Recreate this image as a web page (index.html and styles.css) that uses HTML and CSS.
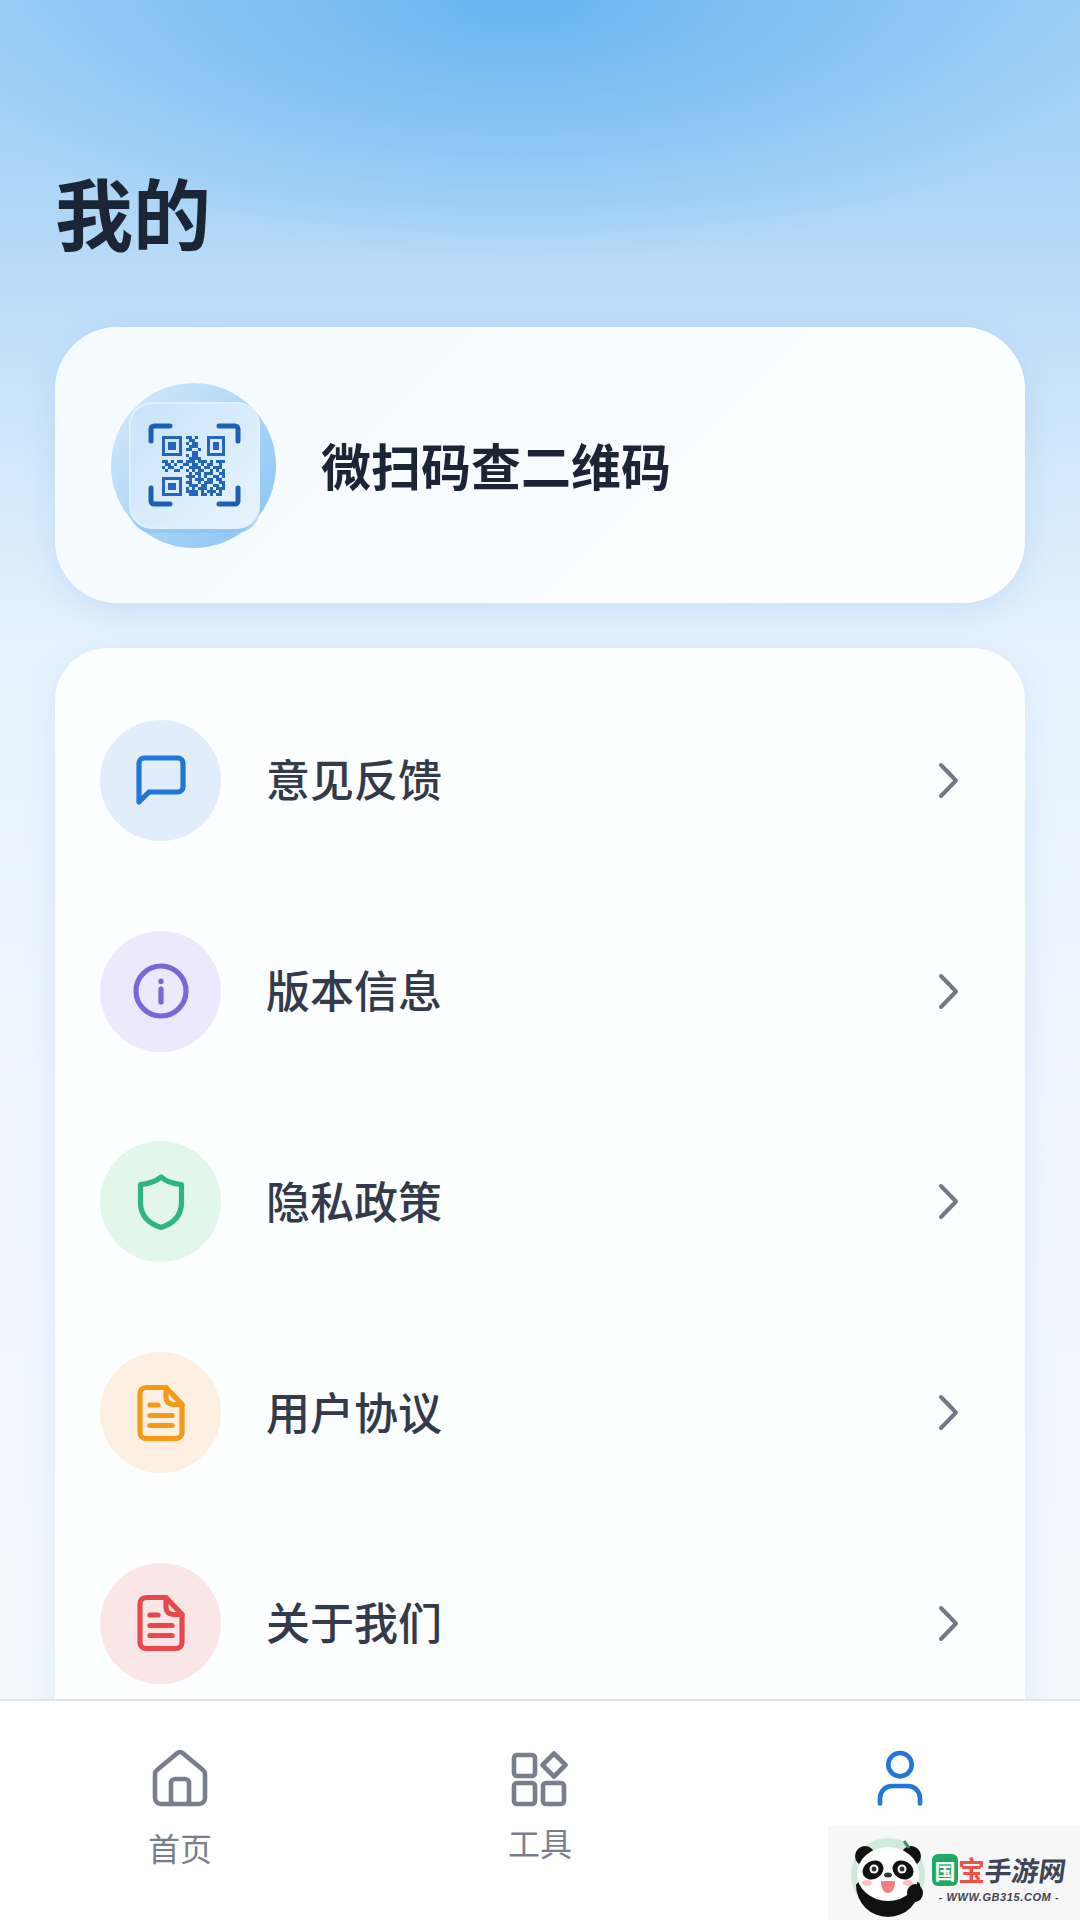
FILE: index.html
```html
<!DOCTYPE html>
<html lang="zh-CN">
<head>
    <meta charset="UTF-8">
    <meta name="viewport" content="width=device-width, initial-scale=1.0">
    <link rel="stylesheet" href="styles.css">
    <title>我的</title>
</head>
<body>
    <svg class="icon-defs" viewBox="0 0 0 0">
        <defs>
            <g id="icon-doc">
                <path d="M15 4.5h20l16 17v28a6 6 0 0 1-6 6H15a6 6 0 0 1-6-6v-39a6 6 0 0 1 6-6z"></path>
                <path d="M35 4.5v10a7 7 0 0 0 7 7h9"></path>
                <path d="M19 22h8M19 32.500h22M19 42.500h22"></path>
            </g>
            <path id="icon-chevron" d="M4 3l15 15.500L4 34"></path>
            <linearGradient id="avatarGradient" x1="0" y1="0" x2="1" y2="1">
                <stop offset="0%" stop-color="#d8ebfb"/>
                <stop offset="100%" stop-color="#84c1f3"/>
            </linearGradient>
            <linearGradient id="tileGradient" x1="0" y1="0" x2="1" y2="1">
                <stop offset="0%" stop-color="#c8e3fa"/>
                <stop offset="100%" stop-color="#e9f4fd"/>
            </linearGradient>
        </defs>
    </svg>

    <div class="page">
        <main class="main">
            <h1 class="main__title">我的</h1>

            <section class="profile-card">
                <svg class="profile-card__avatar" viewBox="0 0 165 165">
                    <circle cx="82.500" cy="82.500" r="82.500" fill="url(#avatarGradient)"></circle>
                    <rect x="19" y="22" width="129" height="128" rx="22" fill="#8fc5f3" opacity="0.7"></rect>
                    <rect x="19" y="20" width="129" height="125" rx="22" fill="url(#tileGradient)" stroke="#e2f0fc" stroke-width="2"></rect>
                    <path class="qr-frame" d="M40 58V46a3 3 0 0 1 3-3h16M108 43h16a3 3 0 0 1 3 3v12M40 105v13a3 3 0 0 0 3 3h16M127 105v13a3 3 0 0 1-3 3h-16"></path>
                    <g transform="translate(51 53)">
                        <path class="qr-finder" d="M1.500 1.500h17v17h-17zM46.500 1.500h15v17h-15zM1.500 42.500h17v16h-17z"></path>
                        <path class="qr-solid" d="M6 6h8v8H6zM51 6h6v8h-6zM6 47h8v7H6z"></path>
                        <path class="qr-cells" d="M24 1.500h6M33 1.500h3M27 4.500h6M24 7.500h3M30 7.500h6M27 10.500h9M24 13.500h6M36 13.500h3M30 16.500h6M24 19.500h3M30 19.500h6M27 22.500h12M0 25.500h6M9 25.500h3M15 25.500h6M24 25.500h9M36 25.500h9M48 25.500h3M54 25.500h9M3 28.500h6M12 28.500h3M21 28.500h6M30 28.500h6M39 28.500h3M45 28.500h6M57 28.500h3M0 31.500h3M6 31.500h6M18 31.500h3M27 31.500h12M42 31.500h6M51 31.500h9M3 34.500h3M12 34.500h6M24 34.500h3M30 34.500h3M36 34.500h6M48 34.500h3M54 34.500h3M60 34.500h3M27 37.500h3M33 37.500h6M42 37.500h9M57 37.500h6M24 40.500h9M36 40.500h3M42 40.500h3M51 40.500h6M60 40.500h3M27 43.500h3M33 43.500h9M45 43.500h6M54 43.500h6M24 46.500h6M36 46.500h3M42 46.500h9M57 46.500h6M27 49.500h9M39 49.500h6M51 49.500h6M60 49.500h3M24 52.500h3M30 52.500h3M36 52.500h9M48 52.500h3M54 52.500h9M24 55.500h12M39 55.500h3M45 55.500h9M57 55.500h3M27 58.500h9M39 58.500h6M48 58.500h3M54 58.500h6"></path>
                    </g>
                </svg>
                <div class="profile-card__name">微扫码查二维码</div>
            </section>

            <section class="menu-card">
                <div class="menu-item">
                    <div class="menu-item__icon menu-item__icon--blue">
                        <svg viewBox="0 0 60 60"><path d="M8 52V13a5 5 0 0 1 5-5h34a5 5 0 0 1 5 5v24a5 5 0 0 1-5 5H18z"></path></svg>
                    </div>
                    <div class="menu-item__text">意见反馈</div>
                    <svg class="menu-item__arrow" viewBox="0 0 23 37"><use href="#icon-chevron"></use></svg>
                </div>
                <div class="menu-item">
                    <div class="menu-item__icon menu-item__icon--purple">
                        <svg viewBox="0 0 60 60"><circle cx="30" cy="30" r="25"></circle><path d="M30 28v13M30 20v.5"></path></svg>
                    </div>
                    <div class="menu-item__text">版本信息</div>
                    <svg class="menu-item__arrow" viewBox="0 0 23 37"><use href="#icon-chevron"></use></svg>
                </div>
                <div class="menu-item">
                    <div class="menu-item__icon menu-item__icon--green">
                        <svg viewBox="0 0 60 60"><path d="M30 5c5 4.500 10 6.500 20.500 7.500v18c0 13-8 21-20.500 25-12.500-4-20.500-12-20.500-25v-18C20 11.500 25 9.500 30 5z"></path></svg>
                    </div>
                    <div class="menu-item__text">隐私政策</div>
                    <svg class="menu-item__arrow" viewBox="0 0 23 37"><use href="#icon-chevron"></use></svg>
                </div>
                <div class="menu-item">
                    <div class="menu-item__icon menu-item__icon--orange">
                        <svg viewBox="0 0 60 60"><use href="#icon-doc"></use></svg>
                    </div>
                    <div class="menu-item__text">用户协议</div>
                    <svg class="menu-item__arrow" viewBox="0 0 23 37"><use href="#icon-chevron"></use></svg>
                </div>
                <div class="menu-item">
                    <div class="menu-item__icon menu-item__icon--red">
                        <svg viewBox="0 0 60 60"><use href="#icon-doc"></use></svg>
                    </div>
                    <div class="menu-item__text">关于我们</div>
                    <svg class="menu-item__arrow" viewBox="0 0 23 37"><use href="#icon-chevron"></use></svg>
                </div>
            </section>
        </main>

        <nav class="tab-bar">
            <div class="tab-bar__item">
                <svg class="tab-bar__icon" viewBox="0 0 60 60">
                    <path d="M27.500 5L7 22a5 5 0 0 0-2 4v24a6 6 0 0 0 6 6h38a6 6 0 0 0 6-6V26a5 5 0 0 0-2-4L32.500 5a4 4 0 0 0-5 0z"></path>
                    <path d="M21 56V35a4 4 0 0 1 4-4h10a4 4 0 0 1 4 4v21"></path>
                </svg>
                <span class="tab-bar__label">首页</span>
            </div>
            <div class="tab-bar__item tab-bar__item--tight">
                <svg class="tab-bar__icon" viewBox="0 0 60 60">
                    <rect x="4" y="7" width="21" height="21" rx="3"></rect>
                    <rect x="4" y="35" width="21" height="21" rx="3"></rect>
                    <rect x="33" y="35" width="21" height="21" rx="3"></rect>
                    <path d="M44 5.500L55.500 17 44 28.500 32.500 17z"></path>
                </svg>
                <span class="tab-bar__label">工具</span>
            </div>
            <div class="tab-bar__item tab-bar__item--active">
                <svg class="tab-bar__icon" viewBox="0 0 60 60">
                    <circle cx="30" cy="16.700" r="11.700"></circle>
                    <path d="M10 55.500V50a12 12 0 0 1 12-12h16a12 12 0 0 1 12 12v5.500"></path>
                </svg>
                <span class="tab-bar__label">我的</span>
            </div>
        </nav>

        <div class="watermark">
            <svg class="watermark__panda" viewBox="0 0 84 84">
                <circle cx="42" cy="40" r="37" fill="#cfe9da"></circle>
                <path d="M10 50a32 32 0 0 0 64 0c0-10-60-10-64 0z" fill="#111"></path>
                <circle cx="19" cy="21" r="10" fill="#111"></circle>
                <circle cx="65" cy="21" r="10" fill="#111"></circle>
                <ellipse cx="42" cy="39" rx="31" ry="27" fill="#fff"></ellipse>
                <ellipse cx="27" cy="35" rx="11" ry="9" fill="#111" transform="rotate(-30 27 35)"></ellipse>
                <ellipse cx="57" cy="35" rx="11" ry="9" fill="#111" transform="rotate(30 57 35)"></ellipse>
                <circle cx="28" cy="34" r="4.500" fill="#fff"></circle>
                <circle cx="56" cy="34" r="4.500" fill="#fff"></circle>
                <circle cx="28" cy="34" r="2.500" fill="#333"></circle>
                <circle cx="56" cy="34" r="2.500" fill="#333"></circle>
                <ellipse cx="42" cy="40" rx="4" ry="2.500" fill="#333"></ellipse>
                <path d="M35 46h14c0 8-3 12-7 12s-7-4-7-12z" fill="#f27f7a"></path>
                <ellipse cx="21" cy="48" rx="5" ry="3" fill="#f9c3c0"></ellipse>
                <ellipse cx="62" cy="48" rx="5" ry="3" fill="#f9c3c0"></ellipse>
                <ellipse cx="69" cy="58" rx="8" ry="9" fill="#111"></ellipse>
                <path d="M58 6l5 7" stroke="#3a8a5e" stroke-width="3"></path>
            </svg>
            <div class="watermark__brand">
                <div class="watermark__name"><span class="watermark__guo">国</span><span class="watermark__bao">宝</span><span class="watermark__shou">手游网</span></div>
                <div class="watermark__url">- WWW.GB315.COM -</div>
            </div>
        </div>
    </div>
</body>
</html>
```

FILE: styles.css
```css
* {
    box-sizing: border-box;
}
body {
    margin: 0;
    font-family: "Noto Sans CJK SC", "Noto Sans", sans-serif;
    color: #333a4b;
}
.icon-defs {
    position: absolute;
    width: 0;
    height: 0;
}
.page {
    position: relative;
    width: 1080px;
    height: 1920px;
    display: flex;
    flex-direction: column;
    overflow: hidden;
    background:
        radial-gradient(ellipse 620px 260px at 520px 0, #68b5f1 0%, rgba(104, 181, 241, 0) 100%),
        linear-gradient(180deg, #a0d0f6 0, #aed6f7 200px, #cbe4fa 400px, #e6f2fd 640px, #eff6fe 1100px, #f3f8fe 1700px);
}
.main {
    flex: 1;
    min-height: 0;
    overflow: hidden;
    padding: 0 55px;
}
.main__title {
    margin: 0;
    padding: 171px 0 76px;
    font-size: 78px;
    line-height: 80px;
    font-weight: 700;
    color: #1c2536;
}

.profile-card {
    height: 276px;
    display: flex;
    align-items: center;
    gap: 45px;
    padding-left: 56px;
    margin-bottom: 45px;
    border-radius: 62px;
    background: linear-gradient(135deg, #f5fafe 0%, #fdfeff 100%);
    box-shadow: 0 8px 30px rgba(120, 170, 225, 0.22);
}
.profile-card__avatar {
    width: 165px;
    height: 165px;
    flex-shrink: 0;
}
.profile-card__name {
    padding-bottom: 2px;
    font-size: 50px;
    font-weight: 700;
    color: #1c2536;
}
.qr-frame {
    fill: none;
    stroke: #1d5fb4;
    stroke-width: 5;
    stroke-linecap: round;
}
.qr-finder {
    fill: none;
    stroke: #2367bd;
    stroke-width: 3;
}
.qr-solid {
    fill: #2367bd;
}
.qr-cells {
    fill: none;
    stroke: #2367bd;
    stroke-width: 3;
}

.menu-card {
    padding-top: 27px;
    height: 1200px;
    border-radius: 52px;
    background: #fdfeff;
    box-shadow: 0 6px 30px rgba(120, 170, 225, 0.18);
}
.menu-item {
    height: 210.750px;
    display: flex;
    align-items: center;
    padding: 0 65px 0 45px;
}
.menu-item__icon {
    width: 121px;
    height: 121px;
    border-radius: 50%;
    display: flex;
    align-items: center;
    justify-content: center;
    flex-shrink: 0;
}
.menu-item__icon svg {
    width: 60px;
    height: 60px;
    fill: none;
    stroke: currentColor;
    stroke-width: 5.200;
    stroke-linecap: round;
    stroke-linejoin: round;
}
.menu-item__icon--blue {
    background: #e2edfb;
    color: #2177d8;
}
.menu-item__icon--purple {
    background: #ece9fc;
    color: #7a66d8;
}
.menu-item__icon--green {
    background: #e2f6ec;
    color: #2db67f;
}
.menu-item__icon--orange {
    background: #fdf0e2;
    color: #f59a17;
}
.menu-item__icon--red {
    background: #fbe6e7;
    color: #e8474c;
}
.menu-item__text {
    flex: 1;
    margin-left: 45px;
    padding-bottom: 4px;
    font-size: 44px;
    font-weight: 500;
}
.menu-item__arrow {
    width: 23px;
    height: 37px;
    fill: none;
    stroke: #727885;
    stroke-width: 4;
    stroke-linecap: round;
    stroke-linejoin: round;
}

.tab-bar {
    height: 221px;
    flex-shrink: 0;
    display: flex;
    background: #fff;
    border-top: 2px solid #e1e4e9;
    padding-top: 47px;
}
.tab-bar__item {
    flex: 1;
    display: flex;
    flex-direction: column;
    align-items: center;
    gap: 16px;
    color: #7a7e8c;
}
.tab-bar__item--tight {
    gap: 11px;
}
.tab-bar__item--active {
    color: #2177d8;
}
.tab-bar__icon {
    width: 60px;
    height: 60px;
    fill: none;
    stroke: currentColor;
    stroke-width: 4.600;
    stroke-linecap: round;
    stroke-linejoin: round;
}
.tab-bar__label {
    font-size: 32px;
    line-height: 46px;
}

.watermark {
    position: absolute;
    right: 0;
    bottom: 0;
    width: 252px;
    height: 94px;
    display: flex;
    align-items: center;
    gap: 2px;
    padding-left: 18px;
    background: #f7f7f7;
}
.watermark__panda {
    width: 84px;
    height: 84px;
    margin-top: 8px;
    flex-shrink: 0;
}
.watermark__brand {
    display: flex;
    flex-direction: column;
    align-items: center;
    margin-top: 12px;
}
.watermark__name {
    display: flex;
    align-items: center;
    font-size: 27px;
    line-height: 32px;
    font-weight: 700;
    white-space: nowrap;
    color: #3f4554;
}
.watermark__guo {
    width: 26px;
    height: 32px;
    display: flex;
    align-items: center;
    justify-content: center;
    border-radius: 6px;
    font-size: 21px;
    background: #1eab5f;
    color: #fff;
}
.watermark__bao {
    color: #ef5146;
}
.watermark__shou {
    transform: skewX(-8deg);
}
.watermark__url {
    margin-top: 4px;
    font-family: "Liberation Sans", sans-serif;
    font-size: 11px;
    line-height: 14px;
    font-weight: 700;
    font-style: italic;
    letter-spacing: 0.6px;
    white-space: nowrap;
    color: #3f4554;
}
```
